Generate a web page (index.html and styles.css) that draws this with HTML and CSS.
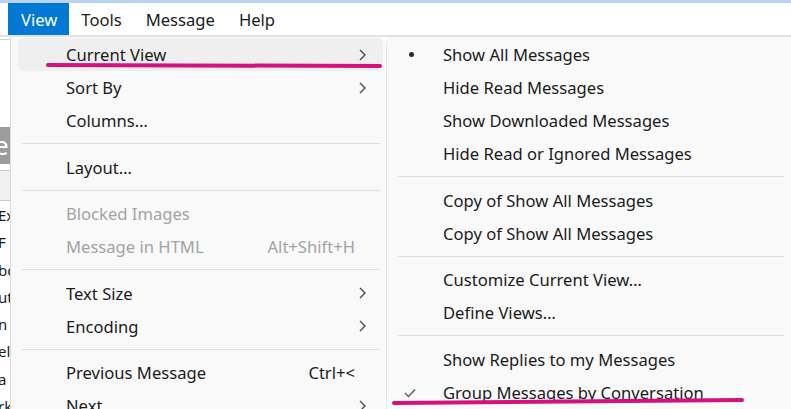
FILE: index.html
```html
<!DOCTYPE html>
<html lang="en">
<head>
    <meta charset="UTF-8">
    <title>View menu</title>
    <link rel="stylesheet" href="styles.css">
</head>
<body>
    <div class="title-strip"></div>

    <nav class="menubar">
        <span class="menubar-item active">View</span>
        <span class="menubar-item">Tools</span>
        <span class="menubar-item">Message</span>
        <span class="menubar-item">Help</span>
    </nav>

    <div class="workspace">
        <!-- the bit of the mail window still visible behind the popups -->
        <div class="app-edge">
            <div class="app-edge-top"></div>
            <div class="app-edge-header">e</div>
            <div class="app-edge-cols"></div>
            <div class="app-edge-rows">
                <span>Ex</span>
                <span>F</span>
                <span>bo</span>
                <span>ut</span>
                <span>n</span>
                <span>ele</span>
                <span>a</span>
                <span>rk</span>
            </div>
        </div>

        <ul class="menu main-menu">
            <li class="menu-item hover">Current View<svg class="chevron" viewBox="0 0 7 12"><polyline points="1,1 6,6 1,11"/></svg></li>
            <li class="menu-item">Sort By<svg class="chevron" viewBox="0 0 7 12"><polyline points="1,1 6,6 1,11"/></svg></li>
            <li class="menu-item">Columns…</li>
            <li class="separator"></li>
            <li class="menu-item">Layout…</li>
            <li class="separator"></li>
            <li class="menu-item disabled">Blocked Images</li>
            <li class="menu-item disabled">Message in HTML<span class="shortcut">Alt+Shift+H</span></li>
            <li class="separator"></li>
            <li class="menu-item">Text Size<svg class="chevron" viewBox="0 0 7 12"><polyline points="1,1 6,6 1,11"/></svg></li>
            <li class="menu-item">Encoding<svg class="chevron" viewBox="0 0 7 12"><polyline points="1,1 6,6 1,11"/></svg></li>
            <li class="separator"></li>
            <li class="menu-item">Previous Message<span class="shortcut">Ctrl+&lt;</span></li>
            <li class="menu-item">Next<svg class="chevron" viewBox="0 0 7 12"><polyline points="1,1 6,6 1,11"/></svg></li>
        </ul>

        <ul class="menu sub-menu">
            <li class="menu-item"><span class="mark"><span class="bullet"></span></span>Show All Messages</li>
            <li class="menu-item"><span class="mark"></span>Hide Read Messages</li>
            <li class="menu-item"><span class="mark"></span>Show Downloaded Messages</li>
            <li class="menu-item"><span class="mark"></span>Hide Read or Ignored Messages</li>
            <li class="separator"></li>
            <li class="menu-item"><span class="mark"></span>Copy of Show All Messages</li>
            <li class="menu-item"><span class="mark"></span>Copy of Show All Messages</li>
            <li class="separator"></li>
            <li class="menu-item"><span class="mark"></span>Customize Current View…</li>
            <li class="menu-item"><span class="mark"></span>Define Views…</li>
            <li class="separator"></li>
            <li class="menu-item"><span class="mark"></span>Show Replies to my Messages</li>
            <li class="menu-item"><span class="mark"><svg class="check" viewBox="0 0 12 10"><polyline points="1,5 4.5,8.5 11,1.5"/></svg></span>Group Messages by Conversation</li>
        </ul>
    </div>

    <!-- hand-drawn highlight strokes on top of the screenshot -->
    <svg class="annotations" viewBox="0 0 791 409">
        <line x1="48" y1="65" x2="380" y2="66"/>
        <line x1="394" y1="403" x2="742" y2="400"/>
    </svg>
</body>
</html>
```

FILE: styles.css
```css
* {
    margin: 0;
    padding: 0;
    box-sizing: border-box;
}

body {
    width: 791px;
    height: 409px;
    overflow: hidden;
    position: relative;
    background: #ffffff;
    font-family: 'Noto Sans', 'Open Sans', sans-serif;
    font-size: 16.6px;
    color: #1b1b1b;
}

.title-strip {
    height: 3px;
    background: #b9d3ec;
}

.menubar {
    display: flex;
    height: 32px;
    padding-left: 8px;
    background: #ffffff;
}

.menubar-item {
    display: flex;
    align-items: center;
    padding: 0 12px;
    color: #1b1b1b;
}

.menubar-item.active {
    background: #0078d4;
    color: #ffffff;
    padding: 0 12px 0 13px;
}

.workspace {
    display: flex;
    height: 374px;
    border-top: 2px solid #e3e3e3;
}

/* window content peeking out on the left */
.app-edge {
    width: 11px;
    flex-shrink: 0;
    overflow: hidden;
    background: #ffffff;
    border-right: 1px solid #dcdcdc;
    font-size: 15px;
}

.app-edge-top {
    height: 88px;
    border-top: 1px solid #d0d0d0;
    margin-top: 2px;
}

.app-edge-header {
    height: 37px;
    background: #9c9c9c;
    color: #ffffff;
    font-size: 26px;
    line-height: 37px;
    text-indent: -6px;
}

.app-edge-cols {
    height: 31px;
    margin-top: 6px;
    background: #f0f0f0;
    border-top: 1px solid #c9c9c9;
    border-bottom: 1px solid #c9c9c9;
}

.app-edge-rows {
    display: flex;
    flex-direction: column;
    padding-top: 1px;
}

.app-edge-rows span {
    flex-shrink: 0;
    height: 27.3px;
    line-height: 27.3px;
    margin-left: -2px;
    white-space: nowrap;
}

.menu {
    list-style: none;
    background: #f9f9f9;
    padding-top: 1px;
}

.main-menu {
    width: 374px;
    flex-shrink: 0;
    border-top-right-radius: 7px;
}

.sub-menu {
    flex: 1;
    margin-left: 1px;
    border-left: 1px solid #e6e6e6;
    border-top-left-radius: 7px;
}

.menu-item {
    display: flex;
    align-items: center;
    height: 33px;
    white-space: nowrap;
}

.main-menu .menu-item {
    margin: 0 2px 0 7px;
    padding: 0 12px 0 48px;
    border-radius: 5px;
}

.main-menu .menu-item.hover {
    background: #efefef;
}

.menu-item.disabled {
    color: #a3a3a3;
}

.shortcut {
    margin-left: auto;
    margin-right: 16px;
}

.chevron {
    width: 7px;
    height: 12px;
    margin-left: auto;
    margin-right: 5px;
    fill: none;
    stroke: #4a4a4a;
    stroke-width: 1.4;
}

.separator {
    height: 13.5px;
    display: flex;
    align-items: center;
}

.separator::after {
    content: "";
    flex: 1;
    height: 1px;
    background: #dedede;
}

.main-menu .separator {
    margin: 0 5px 0 11px;
}

.sub-menu .separator {
    margin: 0 7px 0 11px;
}

.sub-menu .menu-item {
    padding-left: 10px;
}

.mark {
    width: 46px;
    display: flex;
    align-items: center;
    padding-left: 12px;
}

.bullet {
    width: 5px;
    height: 5px;
    border-radius: 50%;
    background: #2a2a2a;
}

.check {
    width: 12px;
    height: 10px;
    margin-left: -5px;
    margin-top: 2px;
    fill: none;
    stroke: #5a5a5a;
    stroke-width: 1.4;
}

.annotations {
    position: absolute;
    top: 0;
    left: 0;
    width: 791px;
    height: 409px;
    pointer-events: none;
}

.annotations line {
    stroke: #d3137b;
    stroke-width: 4;
    stroke-linecap: round;
}
```
